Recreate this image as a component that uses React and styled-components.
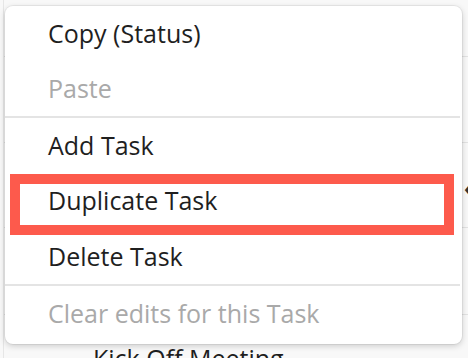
import React from 'react';
import styled, { createGlobalStyle } from 'styled-components';

const GlobalStyle = createGlobalStyle`
  html, body {
    margin: 0;
    padding: 0;
    background: #f8f8f8;
  }

  body {
    font-family: 'Open Sans', 'Noto Sans', sans-serif;
    -webkit-font-smoothing: antialiased;
  }
`;

const Page = styled.div`
  position: relative;
  width: 468px;
  height: 358px;
  overflow: hidden;
  background: #f8f8f8;
`;

const Backdrop = styled.div`
  display: flex;
  flex-direction: column;
  margin-left: 3px;
  border-left: 1px solid #e6e6e6;
`;

const TableRow = styled.div`
  display: flex;
  align-items: center;
  justify-content: ${p => (p.$end ? 'flex-end' : 'flex-start')};
  height: ${p => p.$h}px;
  box-sizing: border-box;
  border-bottom: 1px solid #e2e2e2;
  padding-left: 89px;
  font-size: 25px;
  color: #1e1e1e;
`;

const Chevron = styled.span`
  font-size: 22px;
  font-weight: 700;
  line-height: 1;
  color: #333;
  margin-right: -4px;
  margin-top: 4px;
`;

const Menu = styled.ul`
  position: absolute;
  left: 5px;
  top: 6px;
  width: 457px;
  margin: 0;
  padding: 0 0 4px;
  list-style: none;
  background: #fff;
  border-radius: 8px;
  box-shadow: 0 0 0 1px rgba(0, 0, 0, 0.05), 0 2px 6px rgba(0, 0, 0, 0.18);
`;

const Item = styled.li`
  position: relative;
  display: flex;
  align-items: center;
  height: ${p => p.$h || 54}px;
  padding-left: 43px;
  font-size: 25px;
  color: ${p => (p.$disabled ? '#a9a9a9' : '#1f1f1f')};
`;

const Divider = styled.li`
  height: 2px;
  background: #e4e4e4;
  margin-right: 2px;
`;

const Highlight = styled.span`
  position: absolute;
  left: 5px;
  top: 2px;
  width: 444px;
  height: 61px;
  box-sizing: border-box;
  border: 10px solid #fd5a4c;
  pointer-events: none;
`;

export default function App() {
  return (
    <Page>
      <GlobalStyle />
      <Backdrop>
        <TableRow $h={57} />
        <TableRow $h={86} />
        <TableRow $h={85} $end>
          <Chevron>‹</Chevron>
        </TableRow>
        <TableRow $h={87} />
        <TableRow $h={86}>Kick Off Meeting</TableRow>
      </Backdrop>

      <Menu>
        <Item>Copy (Status)</Item>
        <Item $h={56} $disabled>Paste</Item>
        <Divider />
        <Item>Add Task</Item>
        <Item $h={56}>
          Duplicate Task
          <Highlight />
        </Item>
        <Item $h={56}>Delete Task</Item>
        <Divider />
        <Item $disabled>Clear edits for this Task</Item>
      </Menu>
    </Page>
  );
}
